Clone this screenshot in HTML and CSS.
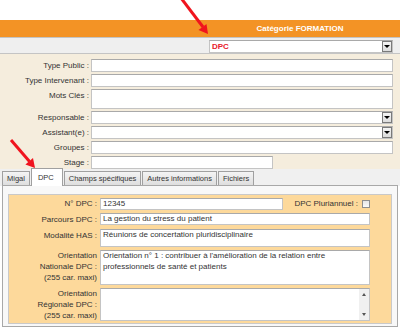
FILE: index.html
```html
<!DOCTYPE html>
<html lang="fr">
<head>
    <meta charset="UTF-8">
    <title>Catégorie FORMATION</title>
    <link rel="stylesheet" href="styles.css">
</head>
<body>
    <div class="header">Catégorie FORMATION</div>

    <div class="cat-bar">
        <div class="select cat-select">
            <span class="val">DPC</span>
            <span class="drop"></span>
        </div>
    </div>

    <!-- General fields -->
    <div class="general">
        <div class="label">Type Public :</div>
        <div class="field"></div>

        <div class="label">Type Intervenant :</div>
        <div class="field"></div>

        <div class="label">Mots Clés :</div>
        <div class="field tall"></div>

        <div class="label">Responsable :</div>
        <div class="select"><span class="val"></span><span class="drop"></span></div>

        <div class="label">Assistant(e) :</div>
        <div class="select"><span class="val"></span><span class="drop"></span></div>

        <div class="label">Groupes :</div>
        <div class="field"></div>

        <div class="label">Stage :</div>
        <div class="field short"></div>
    </div>

    <div class="tabs">
        <div class="tab">Migal</div>
        <div class="tab active">DPC</div>
        <div class="tab">Champs spécifiques</div>
        <div class="tab">Autres informations</div>
        <div class="tab">Fichiers</div>
    </div>

    <div class="panel">
        <div class="fieldset">
            <div class="label">N° DPC :</div>
            <div class="first-row">
                <div class="field num">12345</div>
                <div class="pluri">DPC Pluriannuel :</div>
                <span class="checkbox"></span>
            </div>

            <div class="label">Parcours DPC :</div>
            <div class="field">La gestion du stress du patient</div>

            <div class="label">Modalité HAS :</div>
            <div class="field h18">Réunions de concertation pluridisciplinaire</div>

            <div class="label multi">Orientation<br>Nationale DPC :<br>(255 car. maxi)</div>
            <div class="field h35">Orientation n° 1 : contribuer à l'amélioration de la relation entre<br>professionnels de santé et patients</div>

            <div class="label multi middle">Orientation<br>Régionale DPC :<br>(255 car. maxi)</div>
            <div class="field h33 with-scroll">
                <div class="text"></div>
                <div class="scrollbar">
                    <span class="arrow-up"></span>
                    <span class="arrow-down"></span>
                </div>
            </div>
        </div>
    </div>

    <!-- Annotation arrows -->
    <svg class="arrows" width="400" height="329" viewBox="0 0 400 329">
        <line x1="181" y1="-2" x2="203" y2="27" stroke="#f0141e" stroke-width="3"/>
        <polygon points="208,34 198.5,29.9 206.5,23.9" fill="#f0141e"/>
        <line x1="11" y1="140" x2="29.5" y2="161.5" stroke="#f0141e" stroke-width="3"/>
        <polygon points="35,168 25.4,164.4 33,157.9" fill="#f0141e"/>
    </svg>
</body>
</html>
```

FILE: styles.css
```css
* {
    box-sizing: border-box;
}

body {
    margin: 0;
    width: 400px;
    height: 329px;
    position: relative;
    background: #fff;
    font-family: 'Liberation Sans', Arial, sans-serif;
    font-size: 8px;
    color: #333;
    overflow: hidden;
}

.header {
    margin-top: 20px;
    height: 17px;
    line-height: 17px;
    padding-left: 200px;
    text-align: center;
    background: #f39325;
    color: #fff;
    font-weight: bold;
}

.cat-bar {
    height: 17px;
    background: #efefef;
    border-top: 1px solid #c4c4c4;
    border-bottom: 1px solid #c4c4c4;
    padding: 2px 0 0 209px;
}

/* Inputs */
.field,
.select {
    background: #fff;
    border: 1px solid #c4c4c4;
    border-top-color: #a9a9a9;
    height: 13px;
    line-height: 11px;
    padding: 0 2px;
    white-space: nowrap;
}

.select {
    display: flex;
    padding: 0 0 0 2px;
}

.select .val {
    flex: 1;
}

.select .drop {
    width: 10px;
    height: 11px;
    border: 1px solid #7a7a7a;
    background: linear-gradient(#f4f4f4, #dcdcdc);
    display: flex;
    align-items: center;
    justify-content: center;
}

.select .drop::after {
    content: '';
    border-left: 3px solid transparent;
    border-right: 3px solid transparent;
    border-top: 3px solid #000;
}

.cat-select {
    width: 184px;
}

.cat-select .val {
    color: #e8202a;
    font-weight: bold;
}

.label {
    text-align: right;
    line-height: 13px;
    white-space: nowrap;
}

.general {
    background: #f5eddd;
    display: grid;
    grid-template-columns: 89px 302px;
    column-gap: 2px;
    row-gap: 2px;
    padding: 5px 0 0 0;
}

.field.tall {
    height: 20px;
}

.field.short {
    width: 182px;
}

/* Tabs */
.tabs {
    display: flex;
    align-items: flex-end;
    height: 17px;
    padding-left: 2px;
    background: #f0f0f0;
}

.tab {
    height: 14px;
    margin-bottom: 1px;
    margin-right: 1px;
    padding: 0 4px;
    line-height: 13px;
    font-size: 7.5px;
    border: 1px solid #a0a0a0;
    border-bottom: none;
    background: linear-gradient(#f4f4f4, #dedede);
    white-space: nowrap;
}

.tab.active {
    height: 18px;
    margin-bottom: 0;
    padding: 2px 8px 0 6px;
    background: #fff;
    position: relative;
    z-index: 1;
}

.panel {
    margin: -1px 2px 0 2px;
    height: 142px;
    border: 1px solid #a8a8a8;
    background: #f8f8f8;
    padding: 8px 5px 4px 5px;
}

.fieldset {
    background: #fdd99b;
    border: 1px solid #c9c9c9;
    display: grid;
    grid-template-columns: 88px 270px;
    column-gap: 3px;
    row-gap: 3px;
    padding: 2px 0 2px 0;
}

.fieldset .field {
    height: 12px;
    line-height: 10px;
}

.fieldset .field.h18 {
    height: 18px;
}

.fieldset .field.h35 {
    height: 35px;
    line-height: 10.5px;
    white-space: normal;
}

.fieldset .field.h33 {
    height: 33px;
}

.label.multi {
    line-height: 11px;
}

.label.middle {
    align-self: center;
}

.first-row {
    display: flex;
    align-items: center;
}

.field.num {
    width: 183px;
}

.pluri {
    flex: 1;
    text-align: right;
    padding-right: 4px;
}

.checkbox {
    width: 8px;
    height: 8px;
    border: 1px solid #8e8e8e;
    background: linear-gradient(#e6e6e6, #fafafa);
}

.with-scroll {
    display: flex;
    padding: 0 0 0 2px;
}

.with-scroll .text {
    flex: 1;
}

.scrollbar {
    width: 10px;
    background: #f0f0f0;
    display: flex;
    flex-direction: column;
    justify-content: space-between;
    align-items: center;
    padding: 4px 0;
}

.arrow-up {
    border-left: 2px solid transparent;
    border-right: 2px solid transparent;
    border-bottom: 3px solid #555;
}

.arrow-down {
    border-left: 2px solid transparent;
    border-right: 2px solid transparent;
    border-top: 3px solid #555;
}

.arrows {
    position: absolute;
    top: 0;
    left: 0;
    pointer-events: none;
}
```
